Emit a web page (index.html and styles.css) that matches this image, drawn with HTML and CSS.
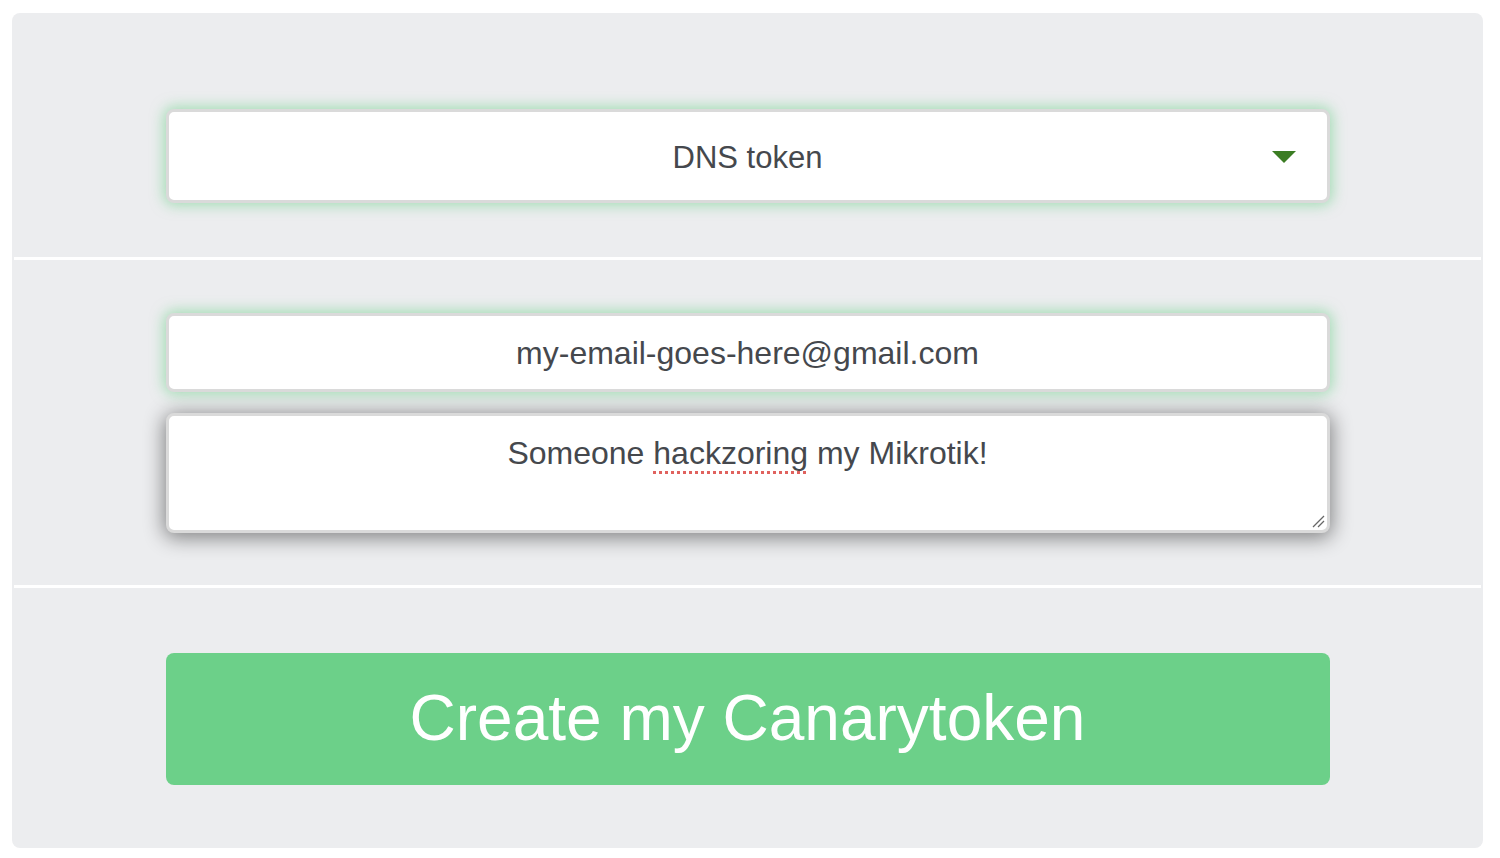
FILE: index.html
```html
<!DOCTYPE html>
<html lang="en">
<head>
<meta charset="utf-8">
<title>Create a Canarytoken</title>
<link rel="stylesheet" href="styles.css">
</head>
<body>
<div class="panel">
  <div class="section section-select">
    <div class="field select-box">
      <span class="field-text">DNS token</span>
      <span class="caret"></span>
    </div>
  </div>
  <div class="divider"></div>
  <div class="section section-inputs">
    <div class="field input-box">
      <span class="field-text">my-email-goes-here@gmail.com</span>
    </div>
    <div class="field textarea-box">
      <span class="field-text">Someone <span class="misspelled">hackzoring</span> my Mikrotik!</span>
      <svg class="grip" width="14" height="14" viewBox="0 0 14 14">
        <line x1="2" y1="13" x2="13" y2="2" stroke="#666" stroke-width="1.2"/>
        <line x1="7" y1="13" x2="13" y2="7" stroke="#666" stroke-width="1.2"/>
      </svg>
    </div>
  </div>
  <div class="divider"></div>
  <div class="section section-button">
    <div class="create-btn">Create my Canarytoken</div>
  </div>
</div>
</body>
</html>
```
FILE: styles.css
```css
html, body {
  margin: 0;
  padding: 0;
  background: #ffffff;
}

body {
  font-family: "Liberation Sans", Arial, sans-serif;
  padding: 13px 0 10px 12px;
}

.panel {
  width: 1471px;
  background: #ecedef;
  border-radius: 8px;
  box-sizing: border-box;
}

.divider {
  height: 3px;
  background: #ffffff;
  margin: 0 2px;
}

.section {
  display: flex;
  flex-direction: column;
  align-items: center;
}

.section-select {
  padding: 96px 0 54px;
}

.section-inputs {
  padding: 53px 0 52px;
  gap: 21px;
}

.section-button {
  padding: 65px 0 63px;
}

.field {
  position: relative;
  width: 1164px;
  box-sizing: border-box;
  background: #ffffff;
  border: 3px solid #dadada;
  border-radius: 8px;
  color: #45484d;
  font-size: 32px;
  display: flex;
  justify-content: center;
}

.select-box {
  height: 94px;
  align-items: center;
  box-shadow: 0 0 14px 2px rgba(108, 208, 136, 0.6);
}

.select-box .field-text {
  font-size: 31px;
  padding-top: 4px;
}

.caret {
  position: absolute;
  right: 31px;
  top: 39px;
  width: 0;
  height: 0;
  border-left: 12px solid transparent;
  border-right: 12px solid transparent;
  border-top: 12px solid #3b7d23;
}

.input-box {
  height: 79px;
  align-items: center;
  box-shadow: 0 0 14px 2px rgba(108, 208, 136, 0.6);
}

.input-box .field-text {
  padding-top: 2px;
}

.textarea-box {
  height: 120px;
  align-items: flex-start;
  padding-top: 19px;
  box-shadow: 0 3px 20px 2px rgba(0, 0, 0, 0.45);
}

.misspelled {
  text-decoration: underline dotted #e0625e;
  text-decoration-thickness: 3px;
  text-underline-offset: 7px;
}

.grip {
  position: absolute;
  right: 2px;
  bottom: 2px;
}

.create-btn {
  width: 1164px;
  height: 132px;
  background: #6cd089;
  border-radius: 8px;
  color: #ffffff;
  font-size: 64px;
  display: flex;
  align-items: center;
  justify-content: center;
  padding-bottom: 2px;
  box-sizing: border-box;
}
```
